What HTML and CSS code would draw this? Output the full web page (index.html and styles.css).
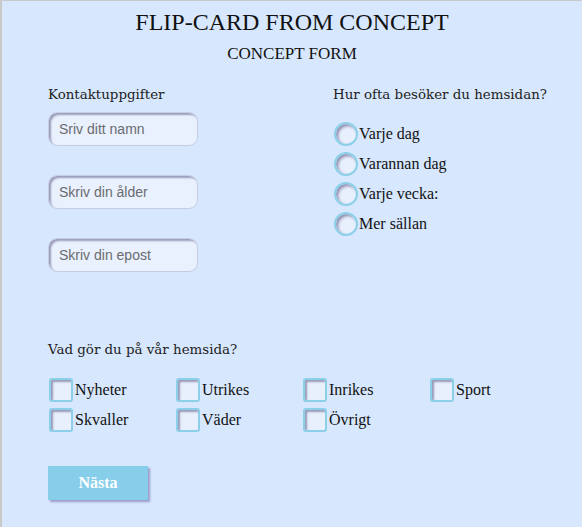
FILE: index.html
```html
<!DOCTYPE html>
<html lang="sv">
<head>
<meta charset="utf-8">
<title>Flip-card from concept</title>
<link rel="stylesheet" href="styles.css">
</head>
<body>
<div class="card">
  <h1 class="title">FLIP-CARD FROM CONCEPT</h1>
  <h2 class="subtitle">CONCEPT FORM</h2>
  <form class="form">
    <div class="top">
      <div class="col contact">
        <p class="label">Kontaktuppgifter</p>
        <input class="field" type="text" placeholder="Sriv ditt namn">
        <input class="field" type="text" placeholder="Skriv din ålder">
        <input class="field" type="text" placeholder="Skriv din epost">
      </div>
      <div class="col visits">
        <p class="label">Hur ofta besöker du hemsidan?</p>
        <div class="radios">
          <label class="opt"><span class="radio"></span>Varje dag</label>
          <label class="opt"><span class="radio"></span>Varannan dag</label>
          <label class="opt"><span class="radio"></span>Varje vecka:</label>
          <label class="opt"><span class="radio"></span>Mer sällan</label>
        </div>
      </div>
    </div>
    <p class="label">Vad gör du på vår hemsida?</p>
    <div class="checks">
      <label class="opt"><span class="box"></span>Nyheter</label>
      <label class="opt"><span class="box"></span>Utrikes</label>
      <label class="opt"><span class="box"></span>Inrikes</label>
      <label class="opt"><span class="box"></span>Sport</label>
      <label class="opt"><span class="box"></span>Skvaller</label>
      <label class="opt"><span class="box"></span>Väder</label>
      <label class="opt"><span class="box"></span>Övrigt</label>
    </div>
    <button class="next" type="button">Nästa</button>
  </form>
</div>
</body>
</html>
```
FILE: styles.css
```css
html, body {
  margin: 0;
  padding: 0;
  background: #d7e7fd;
}
.card {
  box-sizing: border-box;
  height: 527px;
  border-top: 1px solid #c9c9c9;
  border-left: 2px solid #c9c9c9;
  background: #d7e7fd;
  font-family: "Liberation Serif", "Times New Roman", serif;
  color: #111;
  padding: 0 0 0 46px;
}
.title {
  margin: 0;
  padding-top: 7px;
  margin-left: -46px;
  text-align: center;
  font-weight: normal;
  font-size: 24px;
  line-height: 28px;
}
.subtitle {
  margin: 0;
  margin-left: -46px;
  padding-top: 8px;
  text-align: center;
  font-weight: normal;
  font-size: 17px;
  line-height: 20px;
}
.form {
  padding-top: 23px;
}
.top {
  display: grid;
  grid-template-columns: 285px 1fr;
}
.label {
  margin: 0;
  font-family: "DejaVu Serif", Georgia, serif;
  font-size: 13.4px;
  line-height: 16px;
  color: #222;
}
.contact {
  display: flex;
  flex-direction: column;
  align-items: flex-start;
}
.field {
  box-sizing: border-box;
  width: 150px;
  height: 34px;
  margin-top: 9px;
  margin-bottom: 20px;
  padding: 0 10px;
  border: 1px solid #c5cde3;
  border-radius: 9px;
  background: #e9f1fe;
  box-shadow: inset 2px 2px 2px #9b9bbb;
  font-family: "Liberation Sans", Arial, sans-serif;
  font-size: 14px;
  color: #555;
  outline: none;
}
.field::placeholder {
  color: #6b6b70;
}
.radios {
  display: flex;
  flex-direction: column;
  gap: 6px;
  margin-top: 19px;
  margin-left: 1px;
}
.opt {
  display: flex;
  align-items: center;
  font-size: 16px;
  line-height: 24px;
  color: #111;
}
.radio {
  box-sizing: border-box;
  width: 24px;
  height: 24px;
  border-radius: 50%;
  border: 2px solid #8ccfe8;
  background: #e8effd;
  box-shadow: inset 2px 2px 3px #8f8fb0;
  margin-right: 1px;
}
.form > .label {
  margin-top: 50px;
}
.checks {
  display: grid;
  grid-template-columns: repeat(4, 127px);
  row-gap: 6px;
  margin-top: 20px;
  margin-left: 1px;
}
.box {
  box-sizing: border-box;
  width: 24px;
  height: 24px;
  border: 2px solid #8ccfe8;
  border-radius: 3px;
  background: #e8effd;
  box-shadow: inset 2px 2px 2px #9a9ab8;
  margin-right: 2px;
}
.next {
  display: block;
  margin-top: 34px;
  width: 100px;
  height: 34px;
  border: none;
  background: #87ceeb;
  color: #fff;
  font-family: "Liberation Serif", "Times New Roman", serif;
  font-weight: bold;
  font-size: 16px;
  box-shadow: 2px 2px 2px #9b9bc9;
}
```
